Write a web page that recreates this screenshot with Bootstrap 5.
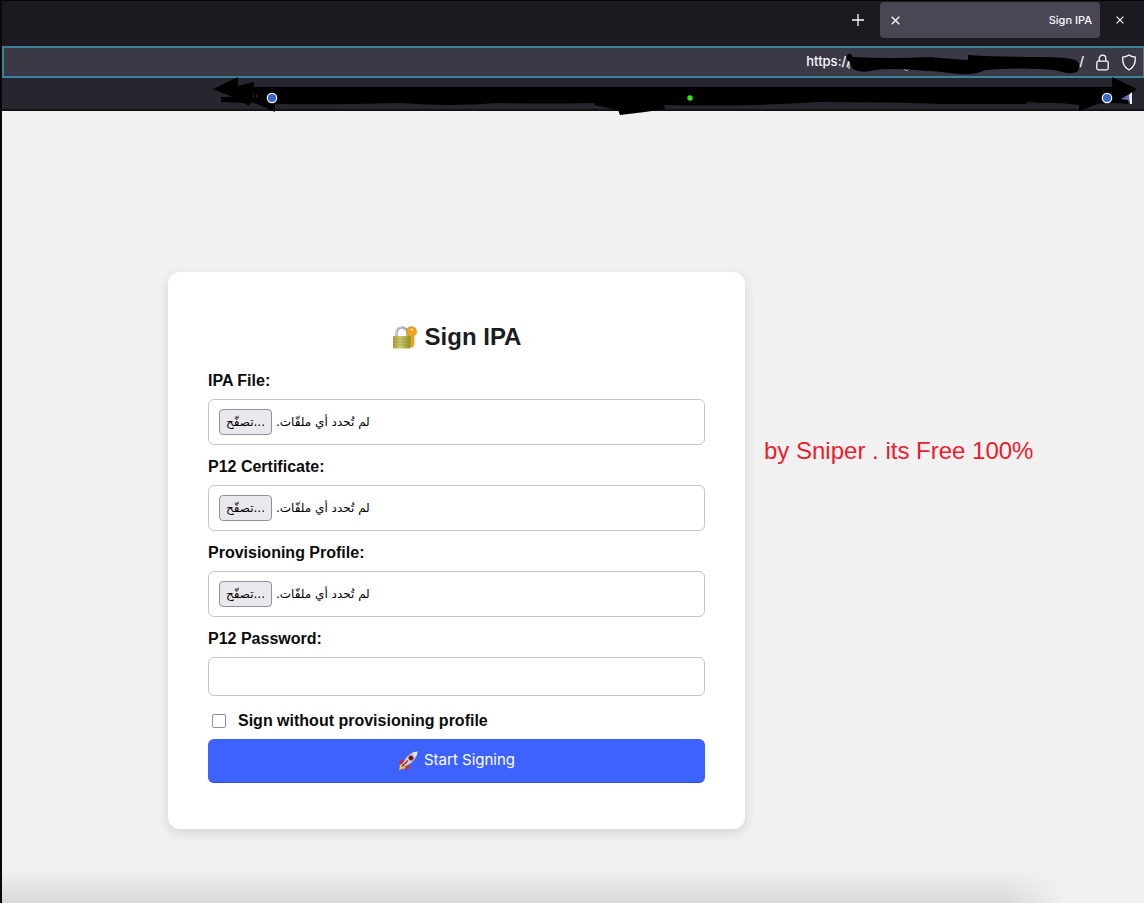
<!DOCTYPE html>
<html lang="en">
<head>
<meta charset="utf-8">
<meta name="viewport" content="width=device-width, initial-scale=1">
<title>Sign IPA</title>
<link href="https://cdn.jsdelivr.net/npm/bootstrap@5.3.0/dist/css/bootstrap.min.css" rel="stylesheet">
<style>
  body { font-family: "Liberation Sans", Arial, sans-serif; background: #f1f1f1; color: #0c0c0d; border-left: 2px solid #08080a; }
  .chrome { font-family: Inter, "Liberation Sans", sans-serif; color: #fbfbfe; background: #27262f; }
  .chrome::before { content: ""; position: absolute; left: -2px; top: 0; width: 2px; height: 88px; background: #6b351e; }
  .tab-strip { height: 46px; background: #1c1a20; border-top: 1px solid #050506; padding: 0 20px 7px; gap: 16px; }
  .tab-current { width: 220px; height: 36px; border-radius: 4px; background: #4a4754; padding: 0 8px 0 11px; font-size: 11px; font-weight: 500; }
  .icon-btn { border: 0; background: none; color: inherit; padding: 0; line-height: 0; }
  .address { height: 32px; background: #3b3945; border: 2px solid #3b839c; border-right-width: 1px; padding: 0 6px; gap: 12px; font-size: 13px; font-weight: 500; }
  .address-host { width: 228px; }
  .bookmarks { height: 33px; border-bottom: 2px solid #111116; }
  .ink { right: 0; top: 0; pointer-events: none; }
  .stage { padding: 161px 24px 74px 166px; }
  .sign-card { flex: 0 1 577px; min-width: 0; background: #fff; border-radius: 12px; padding: 40px 40px 46px; box-shadow: 0 4px 12px rgba(0,0,0,.12); }
  .sign-title { font-size: 24px; line-height: 30px; margin: 10px 0 17px; color: #1c1c1e; gap: 8px; }
  .field-label { display: block; font-weight: 700; font-size: 16px; line-height: 24px; margin: 10px 0 6px; }
  .field-box { width: 100%; background: #fff; border: 1px solid #c6c6c8; border-radius: 6px; }
  .file-box { height: 46px; padding: 0 10px; gap: 4px; font-family: "DejaVu Sans", sans-serif; font-size: 12px; color: #000; }
  .browse { height: 26px; width: 53px; padding: 0; border: 1px solid #8f8f9d; border-radius: 4px; background: #e9e9ed; color: #000; font-size: 12px; line-height: 20px; white-space: nowrap; }
  .file-box input { inset: 0; opacity: 0; cursor: pointer; }
  .pass-box { display: block; height: 39px; padding: 8px; font-size: 16px; }
  .check-row { margin: 13px 0 6px; gap: 12px; padding-left: 4px; font-weight: 700; }
  .check-row input { width: 14px; height: 14px; margin: 0; appearance: none; border: 1px solid #8f8f9d; border-radius: 2px; background: #fff; }
  .check-row input:checked { background: #3d62ff; }
  .start-btn { height: 44px; border: 0; border-bottom: 1px solid #2c4ee0; border-radius: 6px; background: #3d62ff; color: #fff; font-family: Inter, "Liberation Sans", sans-serif; font-size: 15px; gap: 6px; }
  .credit { flex: none; margin: 161px 0 0 19px; font-size: 24px; line-height: 36px; color: #eb1c2c; }
  .edge-shadow { height: 34px; margin-left: 2px; background: linear-gradient(#f1f1f100, #d8d8d8); mask-image: linear-gradient(90deg, #000 calc(100% - 140px), transparent calc(100% - 80px)); -webkit-mask-image: linear-gradient(90deg, #000 calc(100% - 140px), transparent calc(100% - 80px)); }
</style>
</head>
<body class="min-vh-100 d-flex flex-column">
<header class="chrome position-relative">
  <div class="tab-strip d-flex justify-content-end align-items-center">
    <button class="icon-btn" aria-label="New tab"><svg width="12" height="12" viewBox="0 0 12 12" stroke="currentColor" stroke-width="1.3"><path d="M6 0v12M0 6h12"/></svg></button>
    <div class="tab-current d-flex justify-content-between align-items-center">
      <button class="icon-btn" aria-label="Close tab"><svg width="9" height="9" viewBox="0 0 9 9" stroke="currentColor" stroke-width="1.3"><path d="M.7.7l7.6 7.6M8.3.7L.7 8.3"/></svg></button>
      <span>Sign IPA</span>
    </div>
    <button class="icon-btn" aria-label="Close other tab"><svg width="8" height="8" viewBox="0 0 9 9" stroke="currentColor" stroke-width="1.4"><path d="M.7.7l7.6 7.6M8.3.7L.7 8.3"/></svg></button>
  </div>
  <div class="address d-flex justify-content-end align-items-center">
    <div class="d-flex"><span>https://</span><span class="address-host"></span><span>/</span></div>
    <svg width="13" height="17" viewBox="0 0 13 17" fill="none" stroke="currentColor" stroke-width="1.3"><rect x=".8" y="7.2" width="11.4" height="8.600" rx="1.5"/><path d="M3.2 7V4.500a3.300 3.300 0 0 1 6.600 0V7"/></svg>
    <svg width="16" height="17" viewBox="0 0 16 17" fill="none" stroke="currentColor" stroke-width="1.3"><path d="M8 1c1.800 1.500 4 2 6.300 2.200C14.700 9 12.500 13.500 8 16 3.500 13.500 1.300 9 1.700 3.200 4 3 6.200 2.500 8 1z"/></svg>
  </div>
  <div class="bookmarks"></div>
  <svg class="ink position-absolute" width="1144" height="120" viewBox="0 0 1144 120" aria-hidden="true">
    <path d="M904 69q3 3 5 0" fill="none" stroke="#ddd"/>
    <path d="M847 55Q850 51 853 57Q890 59 930 57Q950 59 968 60V55Q1000 57 1040 57Q1065 57 1076 60Q1082 65 1077 72Q1069 75 1055 70Q1020 67 985 70Q978 75 958 74Q938 71 915 70Q890 68 875 70Q862 74 853 69Q850 66 850 62Q845 60 847 55Z"/>
    <path d="M849 62v7" stroke="#eee" stroke-width="1"/>
    <path d="M213 89L238 77V86L254 82V87H1112V77L1137 89L1128 96V104Q1112 102 1098 104L1079 111V105Q1050 101 1027 104Q980 104 940 104Q900 102 820 102Q740 107 664 105L665 109L645 112L620 115L618 110L594 105V103Q540 104 498 103Q450 107 400 103Q330 105 275 104V112L262 106L251 102L249 106L244 103L221 102V97H233Z"/>
    <path d="M253 96h5" stroke="#777" stroke-dasharray="1 2"/>
    <path d="M1026 103h10" stroke="#183a35"/>
    <circle cx="272" cy="98" r="4.700" fill="#3769c8" stroke="#fff" stroke-width="1.200"/>
    <circle cx="690" cy="98" r="2.700" fill="#35e41a"/>
    <circle cx="1107" cy="98" r="4.700" fill="#3769c8" stroke="#fff" stroke-width="1.200"/>
    <path d="M1121 99l10-6v11l-3-4z" fill="#6670bd"/><path d="M1129 95l3-3v12h-2z" fill="#eee"/>
  </svg>
</header>

<main class="stage d-flex align-items-start flex-grow-1">
  <form class="sign-card" onsubmit="return false">
    <h1 class="sign-title d-flex justify-content-center align-items-center fw-bold">
      <svg width="25" height="25" viewBox="0 0 25 25" aria-hidden="true">
        <defs><linearGradient id="brass" x2="1"><stop stop-color="#a89c35"/><stop offset=".4" stop-color="#d0cb73"/><stop offset="1" stop-color="#8f8d2c"/></linearGradient></defs>
        <path d="M4.500 12V8a5.500 5.500 0 0 1 11 0v4" fill="none" stroke="#a9afbf" stroke-width="2.600"/>
        <path d="M4 12V8a5.800 5.800 0 0 1 6-6" fill="none" stroke="#d5d9e3" stroke-width="1"/>
        <path fill="#efa51c" stroke="#c88413" stroke-width=".5" fill-rule="evenodd" d="M19.500 1.500a5 5 0 0 1 2.500 9.400v9l-2 2.500-3-2 1.200-2-1.200-1.500 1.200-2-1.200-1v-3a5 5 0 0 1 2.500-9.400zm.3 1.800a1.300 1.300 0 1 0 .01 0z"/>
        <rect x="1" y="11" width="17.500" height="12.500" rx="1.200" fill="url(#brass)"/>
        <path d="M1 14h17.500M1 17h17.500M1 20h17.500" stroke="#8e8c2f" stroke-width=".6" opacity=".6"/>
      </svg>
      <span>Sign IPA</span>
    </h1>

    <label class="field-label" for="ipa">IPA File:</label>
    <div class="field-box file-box d-flex align-items-center position-relative">
      <button type="button" class="browse" tabindex="-1">تصفّح...</button><span dir="rtl" lang="ar">لم تُحدد أي ملفّات.</span>
      <input class="position-absolute w-100 h-100" type="file" id="ipa">
    </div>
    <label class="field-label" for="p12">P12 Certificate:</label>
    <div class="field-box file-box d-flex align-items-center position-relative">
      <button type="button" class="browse" tabindex="-1">تصفّح...</button><span dir="rtl" lang="ar">لم تُحدد أي ملفّات.</span>
      <input class="position-absolute w-100 h-100" type="file" id="p12">
    </div>
    <label class="field-label" for="profile">Provisioning Profile:</label>
    <div class="field-box file-box d-flex align-items-center position-relative">
      <button type="button" class="browse" tabindex="-1">تصفّح...</button><span dir="rtl" lang="ar">لم تُحدد أي ملفّات.</span>
      <input class="position-absolute w-100 h-100" type="file" id="profile">
    </div>
    <label class="field-label" for="password">P12 Password:</label>
    <input class="field-box pass-box" type="password" id="password">

    <div class="check-row d-flex align-items-center">
      <input type="checkbox" id="without"><label for="without">Sign without provisioning profile</label>
    </div>
    <button class="start-btn w-100 d-flex justify-content-center align-items-center" type="submit">
      <svg width="20" height="20" viewBox="0 0 20 20" aria-hidden="true">
        <path d="M4.500 12L1 15l1 .8L.8 19.200 5 17.500l.8 1L8.500 15z" fill="#f8c928"/>
        <path d="M7 8.500L3 9l-2.500 4L5 12.200zM11.500 13l-.5 4-4 2.500.8-4.500z" fill="#d92332"/>
        <path d="M19.500.5Q12 .8 7 8l-2.800 5 2.800 2.800 5-2.800Q19.200 8 19.500.5z" fill="#cfd5dc" stroke="#59606c" stroke-width=".6"/>
        <path d="M19.500.5q-3 0-5.500 1.500l4 4q1.500-2.500 1.500-5.500z" fill="#dfe4ea"/>
        <circle cx="13" cy="7" r="2.200" fill="#4a1220" stroke="#a52434" stroke-width="1"/>
        <path d="M4 15.500l6-6" stroke="#b22735" stroke-width="1.500"/>
      </svg>
      <span>Start Signing</span>
    </button>
  </form>
  <p class="credit">by Sniper . its Free 100%</p>
</main>
<div class="edge-shadow position-fixed bottom-0 start-0 end-0"></div>
<script src="https://cdn.jsdelivr.net/npm/bootstrap@5.3.0/dist/js/bootstrap.bundle.min.js"></script>
</body>
</html>
